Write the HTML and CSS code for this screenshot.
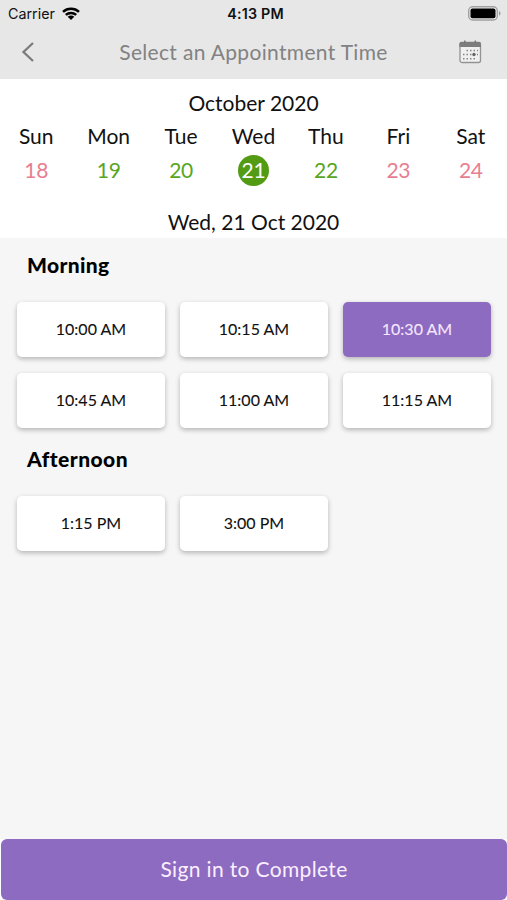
FILE: index.html
```html
<!DOCTYPE html>
<html lang="en">
<head>
<meta charset="utf-8">
<title>Select an Appointment Time</title>
<link rel="stylesheet" href="styles.css">
</head>
<body>
<div class="screen">
  <header class="top">
    <div class="status">
      <div class="carrier"><span>Carrier</span>
        <svg class="wifi" width="18" height="13" viewBox="0 0 18 13"><g fill="none" stroke="#000" stroke-width="2.5"><path d="M1 4.800C5.400 .7 12.600 .7 17 4.800"/><path d="M3.800 7.900c3-2.700 7.400-2.700 10.400 0"/></g><path d="M5.700 9.800c1.900-1.700 4.700-1.700 6.600 0L9 13z"/></svg>
      </div>
      <div class="clock">4:13 PM</div>
      <svg class="battery" width="33" height="15" viewBox="0 0 33 15"><rect x=".7" y=".7" width="28.6" height="13.3" rx="4" fill="#ededed" stroke="#a0a0a0" stroke-width="1.4"/><rect x="2.5" y="2.5" width="25" height="9.7" rx="2" fill="#000"/><path d="M31 5.2c2 .6 2 3.8 0 4.4z" fill="#999"/></svg>
    </div>
    <nav class="nav">
      <svg class="back" width="14" height="22" viewBox="0 0 14 22"><path d="M12 2 2.500 11l9.500 9" fill="none" stroke="#7c7c7c" stroke-width="2.3"/></svg>
      <h1 class="title">Select an Appointment Time</h1>
      <svg class="cal" width="23" height="24" viewBox="0 0 23 24"><rect x="1" y="3" width="20.500" height="19.500" rx="2" fill="#f0f0f0" stroke="#929292" stroke-width="1.300"/><path d="M.4 7V3.500Q.4 1.700 2.400 1.700H20q2 0 2 1.800V7z" fill="#7d7d7d"/><path d="M5.800.6v2.800M16.300.6v2.800" stroke="#777" stroke-width="1.500"/><g stroke="#858585" stroke-width="1.500" stroke-dasharray="1.500 2" fill="none"><path d="M7.500 10.500H19M4 14.500H19M4 18.700H16"/></g><circle cx="15" cy="14.500" r="1.700" fill="#666"/></svg>
    </nav>
  </header>
  <section class="calendar">
    <h2 class="month">October 2020</h2>
    <div class="week names"><span>Sun</span><span>Mon</span><span>Tue</span><span>Wed</span><span>Thu</span><span>Fri</span><span>Sat</span></div>
    <div class="week dates"><span class="full">18</span><span>19</span><span>20</span><span class="chosen">21</span><span>22</span><span class="full">23</span><span class="full">24</span></div>
    <p class="selected-date">Wed, 21 Oct 2020</p>
  </section>
  <main class="slots">
    <h3 class="period morning">Morning</h3>
    <div class="grid">
      <button class="slot">10:00 AM</button><button class="slot">10:15 AM</button><button class="slot active">10:30 AM</button>
      <button class="slot">10:45 AM</button><button class="slot">11:00 AM</button><button class="slot">11:15 AM</button>
    </div>
    <h3 class="period afternoon">Afternoon</h3>
    <div class="grid">
      <button class="slot">1:15 PM</button><button class="slot">3:00 PM</button>
    </div>
  </main>
  <footer class="footer"><button class="submit">Sign in to Complete</button></footer>
</div>
</body>
</html>
```

FILE: styles.css
```css
* { box-sizing: border-box; }
body { margin: 0; background: #f6f6f6; color: #111; font-family: Lato, sans-serif; }
h1, h2, h3, p { margin: 0; font-weight: 400; }
button { border: 0; padding: 0; font-family: inherit; color: inherit; }
svg { display: block; }
.screen { height: 900px; display: flex; flex-direction: column; overflow: hidden; }
.top { height: 79px; background: #e7e7e7; }
.status { height: 27px; display: grid; grid-template-columns: 1fr auto 1fr; align-items: center; padding: 0 6px 0 8px; font: 14.300px/27px Inter, sans-serif; }
.carrier { display: flex; align-items: center; gap: 7px; }
.clock { padding-left: 2px; font-weight: 600; letter-spacing: .2px; }
.battery { justify-self: end; }
.nav { height: 50px; display: grid; grid-template-columns: 60px 1fr 60px; align-items: center; }
.back { margin-left: 21px; }
.title { font-size: 21px; line-height: 50px; text-align: center; color: #828282; letter-spacing: .33px; }
.cal { margin-left: 12px; }
.calendar { height: 159px; background: #fff; text-align: center; font-size: 21px; padding-top: 8px; }
.month { font-size: 21px; line-height: 32px; }
.week { display: grid; grid-template-columns: repeat(7, 1fr); justify-items: center; line-height: 34px; }
.dates { color: #58a61f; letter-spacing: -.3px; }
.full { color: #e87e91; }
.chosen { width: 31px; height: 31px; line-height: 30px; margin-top: 2px; border-radius: 50%; background: #539b13; color: #fff; }
.selected-date { line-height: 32px; margin-top: 19px; }
.slots { flex: 1; padding: 0 16px 0 17px; }
.period { height: 64px; padding-left: 10px; font-size: 21px; line-height: 54px; font-weight: 900; color: #000; }
.morning { letter-spacing: .35px; }
.grid { display: grid; grid-template-columns: repeat(3, 1fr); gap: 16px 15px; }
.afternoon { height: 67.500px; line-height: 62px; letter-spacing: .45px; }
.slot { height: 55px; border-radius: 5px; background: #fff; box-shadow: 0 2px 5px rgba(0,0,0,.27); font-size: 16px; padding-bottom: 2px; -webkit-text-stroke: .1px currentColor; }
.slot.active { background: #8c6bc1; color: #f7e8ff; }
.footer { height: 61px; padding: 0 0 0 1px; background: #fff; }
.submit { display: block; width: 100%; height: 61px; padding-bottom: 2px; border-radius: 6px; background: #8c6bc1; color: #fbeeff; font-size: 21px; letter-spacing: .35px; }
```
